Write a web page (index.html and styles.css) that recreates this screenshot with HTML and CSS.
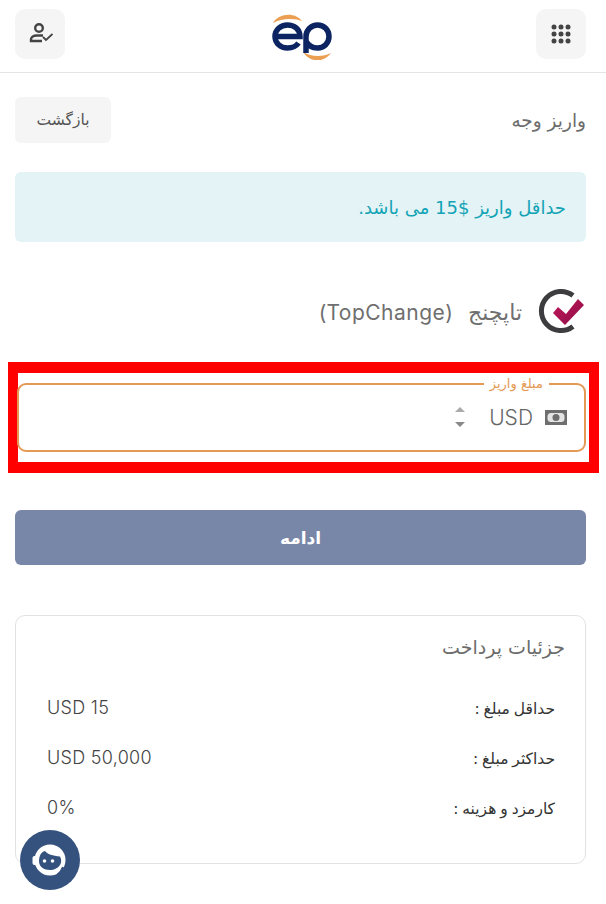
FILE: index.html
```html
<!DOCTYPE html>
<html lang="fa" dir="rtl">

<head>
    <meta charset="UTF-8">
    <meta name="viewport" content="width=device-width, initial-scale=1.0">
    <title>واریز وجه</title>
    <link rel="stylesheet" href="styles.css">
</head>

<body>

    <header class="topbar">
        <button class="icon-btn" aria-label="menu">
            <svg width="20" height="20" viewBox="0 0 20 20" fill="#444">
                <circle cx="3" cy="3" r="2.5"/><circle cx="10" cy="3" r="2.5"/><circle cx="17" cy="3" r="2.5"/>
                <circle cx="3" cy="10" r="2.5"/><circle cx="10" cy="10" r="2.5"/><circle cx="17" cy="10" r="2.5"/>
                <circle cx="3" cy="17" r="2.5"/><circle cx="10" cy="17" r="2.5"/><circle cx="17" cy="17" r="2.5"/>
            </svg>
        </button>
        <svg class="logo" width="64" height="48" viewBox="0 0 64 48" fill="none">
            <path d="M4 11C10 1 26 0 33 9C26 6 12 6 4 11Z" fill="#eb9f52"/>
            <path d="M34 40C42 45 54 45 62 41C55 51 41 51 34 40Z" fill="#eb9f52"/>
            <path d="M6 24.500H31C31 17 25 13 18.500 13C11.500 13 6 18 6 24.500C6 31 11.500 36 18.500 36C23 36 27 34.500 29.500 31" stroke="#0c2461" stroke-width="5.500"/>
            <path d="M37 41V24.500C37 18 42.500 13 48.500 13C55 13 60 18 60 24.500C60 31 55 36 48.500 36C43 36 39 33 37 29" stroke="#0c2461" stroke-width="5.500"/>
        </svg>
        <button class="icon-btn" aria-label="profile">
            <svg width="26" height="22" viewBox="0 0 26 22" fill="none" stroke="#444" stroke-width="2.400">
                <circle cx="12" cy="5" r="3.800"/>
                <path d="M16 12.500H10C6 12.500 4 14.500 4 16.500V18H15"/>
                <path d="M16 14L19 17L25.500 11" stroke-width="1.800"/>
            </svg>
        </button>
    </header>

    <main class="content">
        <div class="page-head">
            <h1 class="page-title">واریز وجه</h1>
            <button class="back-btn">بازگشت</button>
        </div>

        <div class="alert">حداقل واریز $15 می باشد.</div>

        <div class="method">
            <svg width="48" height="48" viewBox="0 0 48 48" fill="none">
                <defs>
                    <linearGradient id="check-fill" x1="0" y1="0" x2="1" y2="1">
                        <stop offset="0" stop-color="#c2185b"/>
                        <stop offset="1" stop-color="#8b0d45"/>
                    </linearGradient>
                </defs>
                <path d="M35 7.500A19.600 19.600 0 1 0 35 38.500" stroke="#3d3d3f" stroke-width="5"/>
                <path d="M15 25L20 19L28 26L40 11L46 17L27 37Z" fill="url(#check-fill)"/>
            </svg>
            <span class="method-name">تاپچنج <span class="method-latin">(TopChange)</span></span>
        </div>

        <div class="field-mark">
            <fieldset class="field">
                <legend class="field-label">مبلغ واریز</legend>
                <div class="field-row">
                    <svg width="22" height="15" viewBox="0 0 22 15">
                        <rect width="22" height="15" fill="#6e6e6e"/>
                        <rect x="2.500" y="3" width="17" height="9" rx="3.500" fill="#e4e4e4"/>
                        <circle cx="11" cy="7.500" r="3.500" fill="#6e6e6e"/>
                    </svg>
                    <span class="currency">USD</span>
                    <span class="spinner"><i class="up"></i><i class="down"></i></span>
                </div>
            </fieldset>
        </div>

        <button class="submit-btn">ادامه</button>

        <section class="details">
            <h2 class="details-title">جزئیات پرداخت</h2>
            <div class="details-row"><span class="details-key">حداقل مبلغ :</span><span class="details-val">USD 15</span></div>
            <div class="details-row"><span class="details-key">حداکثر مبلغ :</span><span class="details-val">USD 50,000</span></div>
            <div class="details-row"><span class="details-key">کارمزد و هزینه :</span><span class="details-val">0%</span></div>
        </section>
    </main>

    <button class="support" aria-label="support">
        <svg width="36" height="36" viewBox="0 0 36 36">
            <circle cx="18" cy="18" r="15.500" fill="#fff"/>
            <rect x="0.500" y="14" width="5" height="9" rx="2" fill="#fff"/>
            <path d="M7 19C7 14 9 10 13 9C15 12 21 14 28 14.500C29.500 17 29.500 20 28.500 22C26.500 26 22 28 18 28C12 28 7 25 7 19Z" fill="#35527f"/>
            <path d="M31 25C30 28 28 31 25 33" fill="none" stroke="#35527f" stroke-width="2"/>
            <circle cx="12.500" cy="19" r="1.800" fill="#fff"/>
            <circle cx="20.500" cy="19" r="1.800" fill="#fff"/>
        </svg>
    </button>

</body>

</html>
```

FILE: styles.css
```css
* {
    box-sizing: border-box;
}

html,
body {
    margin: 0;
    padding: 0;
}

body {
    height: 904px;
    overflow: hidden;
    background: #fff;
    color: #6c6c6c;
    font-family: "DejaVu Sans", "Noto Sans", sans-serif;
}

button {
    font-family: inherit;
    border: none;
    cursor: pointer;
}

.topbar {
    height: 73px;
    display: flex;
    align-items: center;
    justify-content: space-between;
    padding: 0 20px 5px 15px;
    border-bottom: 1px solid #e4e4e4;
}

.icon-btn {
    width: 50px;
    height: 50px;
    padding: 0;
    display: flex;
    align-items: center;
    justify-content: center;
    background: #f5f5f5;
    border-radius: 10px;
}

.logo {
    margin-top: 5px;
}

.content {
    padding: 24px 20px 0 15px;
}

.page-head {
    display: flex;
    align-items: center;
    justify-content: space-between;
    height: 46px;
}

.page-title {
    margin: 0;
    font-size: 18.5px;
    font-weight: 500;
    color: #6c6c6c;
}

.back-btn {
    width: 96px;
    height: 46px;
    background: #f5f5f5;
    border-radius: 6px;
    color: #555;
    font-size: 15.5px;
}

.alert {
    height: 70px;
    margin-top: 29px;
    padding: 0 20px;
    display: flex;
    align-items: center;
    background: #e3f3f6;
    border-radius: 6px;
    color: #12a3b5;
    font-size: 18px;
}

.method {
    display: flex;
    align-items: center;
    gap: 16px;
    height: 48px;
    margin-top: 46px;
}

.method-name {
    font-size: 22px;
    color: #6f6f6f;
}

.method-latin {
    margin-right: 8px;
    font-family: Inter, sans-serif;
    font-size: 21px;
    font-weight: 400;
    letter-spacing: 0.5px;
}

.field-mark {
    height: 111px;
    margin: 26px -13px 0 -7px;
    border: solid #f00;
    border-width: 11px 10px;
}

.field {
    height: 76px;
    margin: 3px 3px 0 -1px;
    padding: 0 17px 0 15px;
    border: 2px solid #e49a55;
    border-radius: 9px;
}

.field-label {
    margin-right: 18px;
    padding: 0 6px;
    font-size: 13px;
    color: #e49a55;
}

.field-row {
    display: flex;
    align-items: center;
    height: 48px;
    gap: 12px;
    margin-top: 2px;
}

.currency {
    font-family: Inter, sans-serif;
    font-size: 21px;
    font-weight: 300;
    color: #666;
}

.spinner {
    display: flex;
    flex-direction: column;
    gap: 10px;
    margin-right: 12px;
}

.spinner i {
    width: 0;
    height: 0;
    border-left: 5px solid transparent;
    border-right: 5px solid transparent;
}

.spinner .up {
    border-bottom: 5px solid #aaa;
}

.spinner .down {
    border-top: 5px solid #888;
}

.submit-btn {
    display: block;
    width: 100%;
    height: 55px;
    margin-top: 37px;
    background: #7886a8;
    border-radius: 6px;
    color: #fff;
    font-size: 17px;
    font-weight: 600;
}

.details {
    height: 249px;
    margin-top: 50px;
    padding: 20px 20px 0 31px;
    border: 1px solid #e2e2e2;
    border-radius: 10px;
}

.details-title {
    margin: 0 0 26px;
    font-size: 19px;
    font-weight: 500;
    color: #6c6c6c;
}

.details-row {
    display: flex;
    align-items: center;
    justify-content: space-between;
    height: 50px;
    margin-right: 10px;
    color: #333;
    font-size: 15.5px;
    word-spacing: -1px;
}

.details-val {
    margin-bottom: 3px;
    font-family: Inter, sans-serif;
    font-size: 18px;
    font-weight: 300;
    letter-spacing: 0.3px;
    word-spacing: 0;
    color: #444;
}

.support {
    position: absolute;
    left: 20px;
    top: 830px;
    width: 60px;
    height: 60px;
    padding: 0;
    display: flex;
    align-items: center;
    justify-content: center;
    background: #35527f;
    border-radius: 50%;
}
```
